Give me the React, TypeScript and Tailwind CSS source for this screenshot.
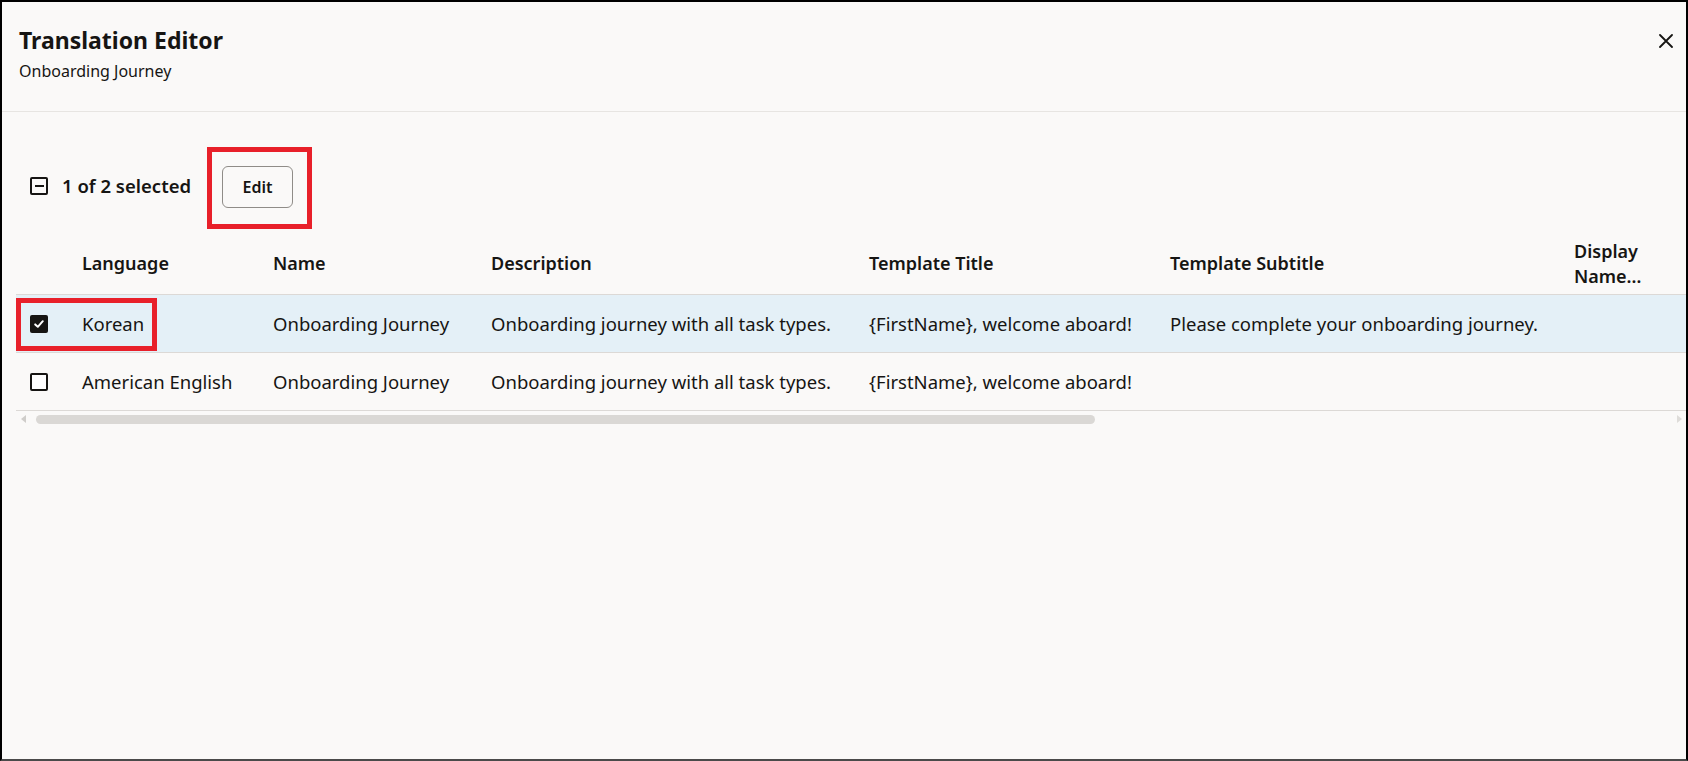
import React from "react";

const cols = "grid grid-cols-[66px_191px_218px_378px_301px_404px_200px]";

type Row = {
  language: string;
  name: string;
  description: string;
  title: string;
  subtitle: string;
  checked: boolean;
};

const rows: Row[] = [
  {
    language: "Korean",
    name: "Onboarding Journey",
    description: "Onboarding journey with all task types.",
    title: "{FirstName}, welcome aboard!",
    subtitle: "Please complete your onboarding journey.",
    checked: true,
  },
  {
    language: "American English",
    name: "Onboarding Journey",
    description: "Onboarding journey with all task types.",
    title: "{FirstName}, welcome aboard!",
    subtitle: "",
    checked: false,
  },
];

function Checkbox({ checked }: { checked: boolean }) {
  if (checked) {
    return (
      <span className="flex h-[18px] w-[18px] items-center justify-center rounded-[2px] bg-[#161513]">
        <svg width="12" height="12" viewBox="0 0 12 12" fill="none">
          <path
            d="M2.2 6.4 L4.8 8.8 L9.8 3.2"
            stroke="#fff"
            strokeWidth="2"
            strokeLinecap="round"
            strokeLinejoin="round"
          />
        </svg>
      </span>
    );
  }
  return (
    <span className="block h-[18px] w-[18px] rounded-[2px] border-2 border-[#161513] bg-white" />
  );
}

export default function App() {
  return (
    <div className="flex h-[761px] w-[1688px] flex-col overflow-hidden border-2 border-black border-b-[#4a4a4a] bg-[#faf9f8] font-['Noto_Sans',sans-serif] text-[#161513]">
      <header className="flex h-[110px] shrink-0 items-start justify-between border-b border-[#e7e5e2] pl-[17px] pr-[13px] pt-[23px]">
        <div>
          <h1 className="text-[23px] font-bold leading-[30px]">Translation Editor</h1>
          <p className="mt-[5px] text-[16px] leading-[22px]">Onboarding Journey</p>
        </div>
        <button className="mt-[9px] flex h-[14px] w-[14px] items-center justify-center" aria-label="Close">
          <svg width="14" height="14" viewBox="0 0 14 14" fill="none">
            <path d="M1 1 L13 13 M13 1 L1 13" stroke="#161513" strokeWidth="1.8" strokeLinecap="round" />
          </svg>
        </button>
      </header>

      <div className="flex items-center pl-[28px] pt-[35px]">
        <div className="flex items-center pb-[4px]">
          <span className="flex h-[18px] w-[18px] items-center justify-center rounded-[2px] border-2 border-[#161513]">
            <span className="block h-[2px] w-[9px] bg-[#161513]" />
          </span>
          <span className="ml-[14px] text-[18.5px] font-semibold leading-[24px]">1 of 2 selected</span>
        </div>
        <div className="ml-[16px] border-[5px] border-[#e8202a] pb-[16px] pl-[10px] pr-[14px] pt-[14px]">
          <button className="flex h-[42px] w-[71px] items-center justify-center rounded-[6px] border border-[#8f8c88] text-[16px] font-semibold">
            Edit
          </button>
        </div>
      </div>

      <div className="ml-[14px] mt-[4px] overflow-hidden">
        <div className="w-[1758px]">
          <div className={`${cols} h-[62px] items-center border-b border-[#dcd9d6] text-[18px] font-semibold leading-[25px]`}>
            <div />
            <div>Language</div>
            <div>Name</div>
            <div>Description</div>
            <div>Template Title</div>
            <div>Template Subtitle</div>
            <div className="w-[80px]">Display Name…</div>
          </div>
          {rows.map((r) => (
            <div
              key={r.language}
              className={`${cols} relative h-[58px] items-center border-b border-[#dcd9d6] text-[18.5px] leading-[25px] ${
                r.checked ? "bg-[#e4f0f7]" : ""
              }`}
            >
              <div className="pl-[14px]">
                <Checkbox checked={r.checked} />
              </div>
              <div>{r.language}</div>
              <div>{r.name}</div>
              <div>{r.description}</div>
              <div>{r.title}</div>
              <div>{r.subtitle}</div>
              <div />
              {r.checked && (
                <div className="absolute left-0 top-[3px] h-[53px] w-[141px] border-[5px] border-[#e8202a]" />
              )}
            </div>
          ))}
        </div>
        <div className="flex h-[16px] items-center">
          <svg className="ml-[5px]" width="5" height="8" viewBox="0 0 5 8">
            <polygon points="5,0 0,4 5,8" fill="#cfcdca" />
          </svg>
          <div className="ml-[10px] h-[9px] w-[1059px] rounded-full bg-[#dad8d5]" />
          <svg className="ml-auto mr-[4px]" width="5" height="8" viewBox="0 0 5 8">
            <polygon points="0,0 5,4 0,8" fill="#dedcd9" />
          </svg>
        </div>
      </div>
    </div>
  );
}
